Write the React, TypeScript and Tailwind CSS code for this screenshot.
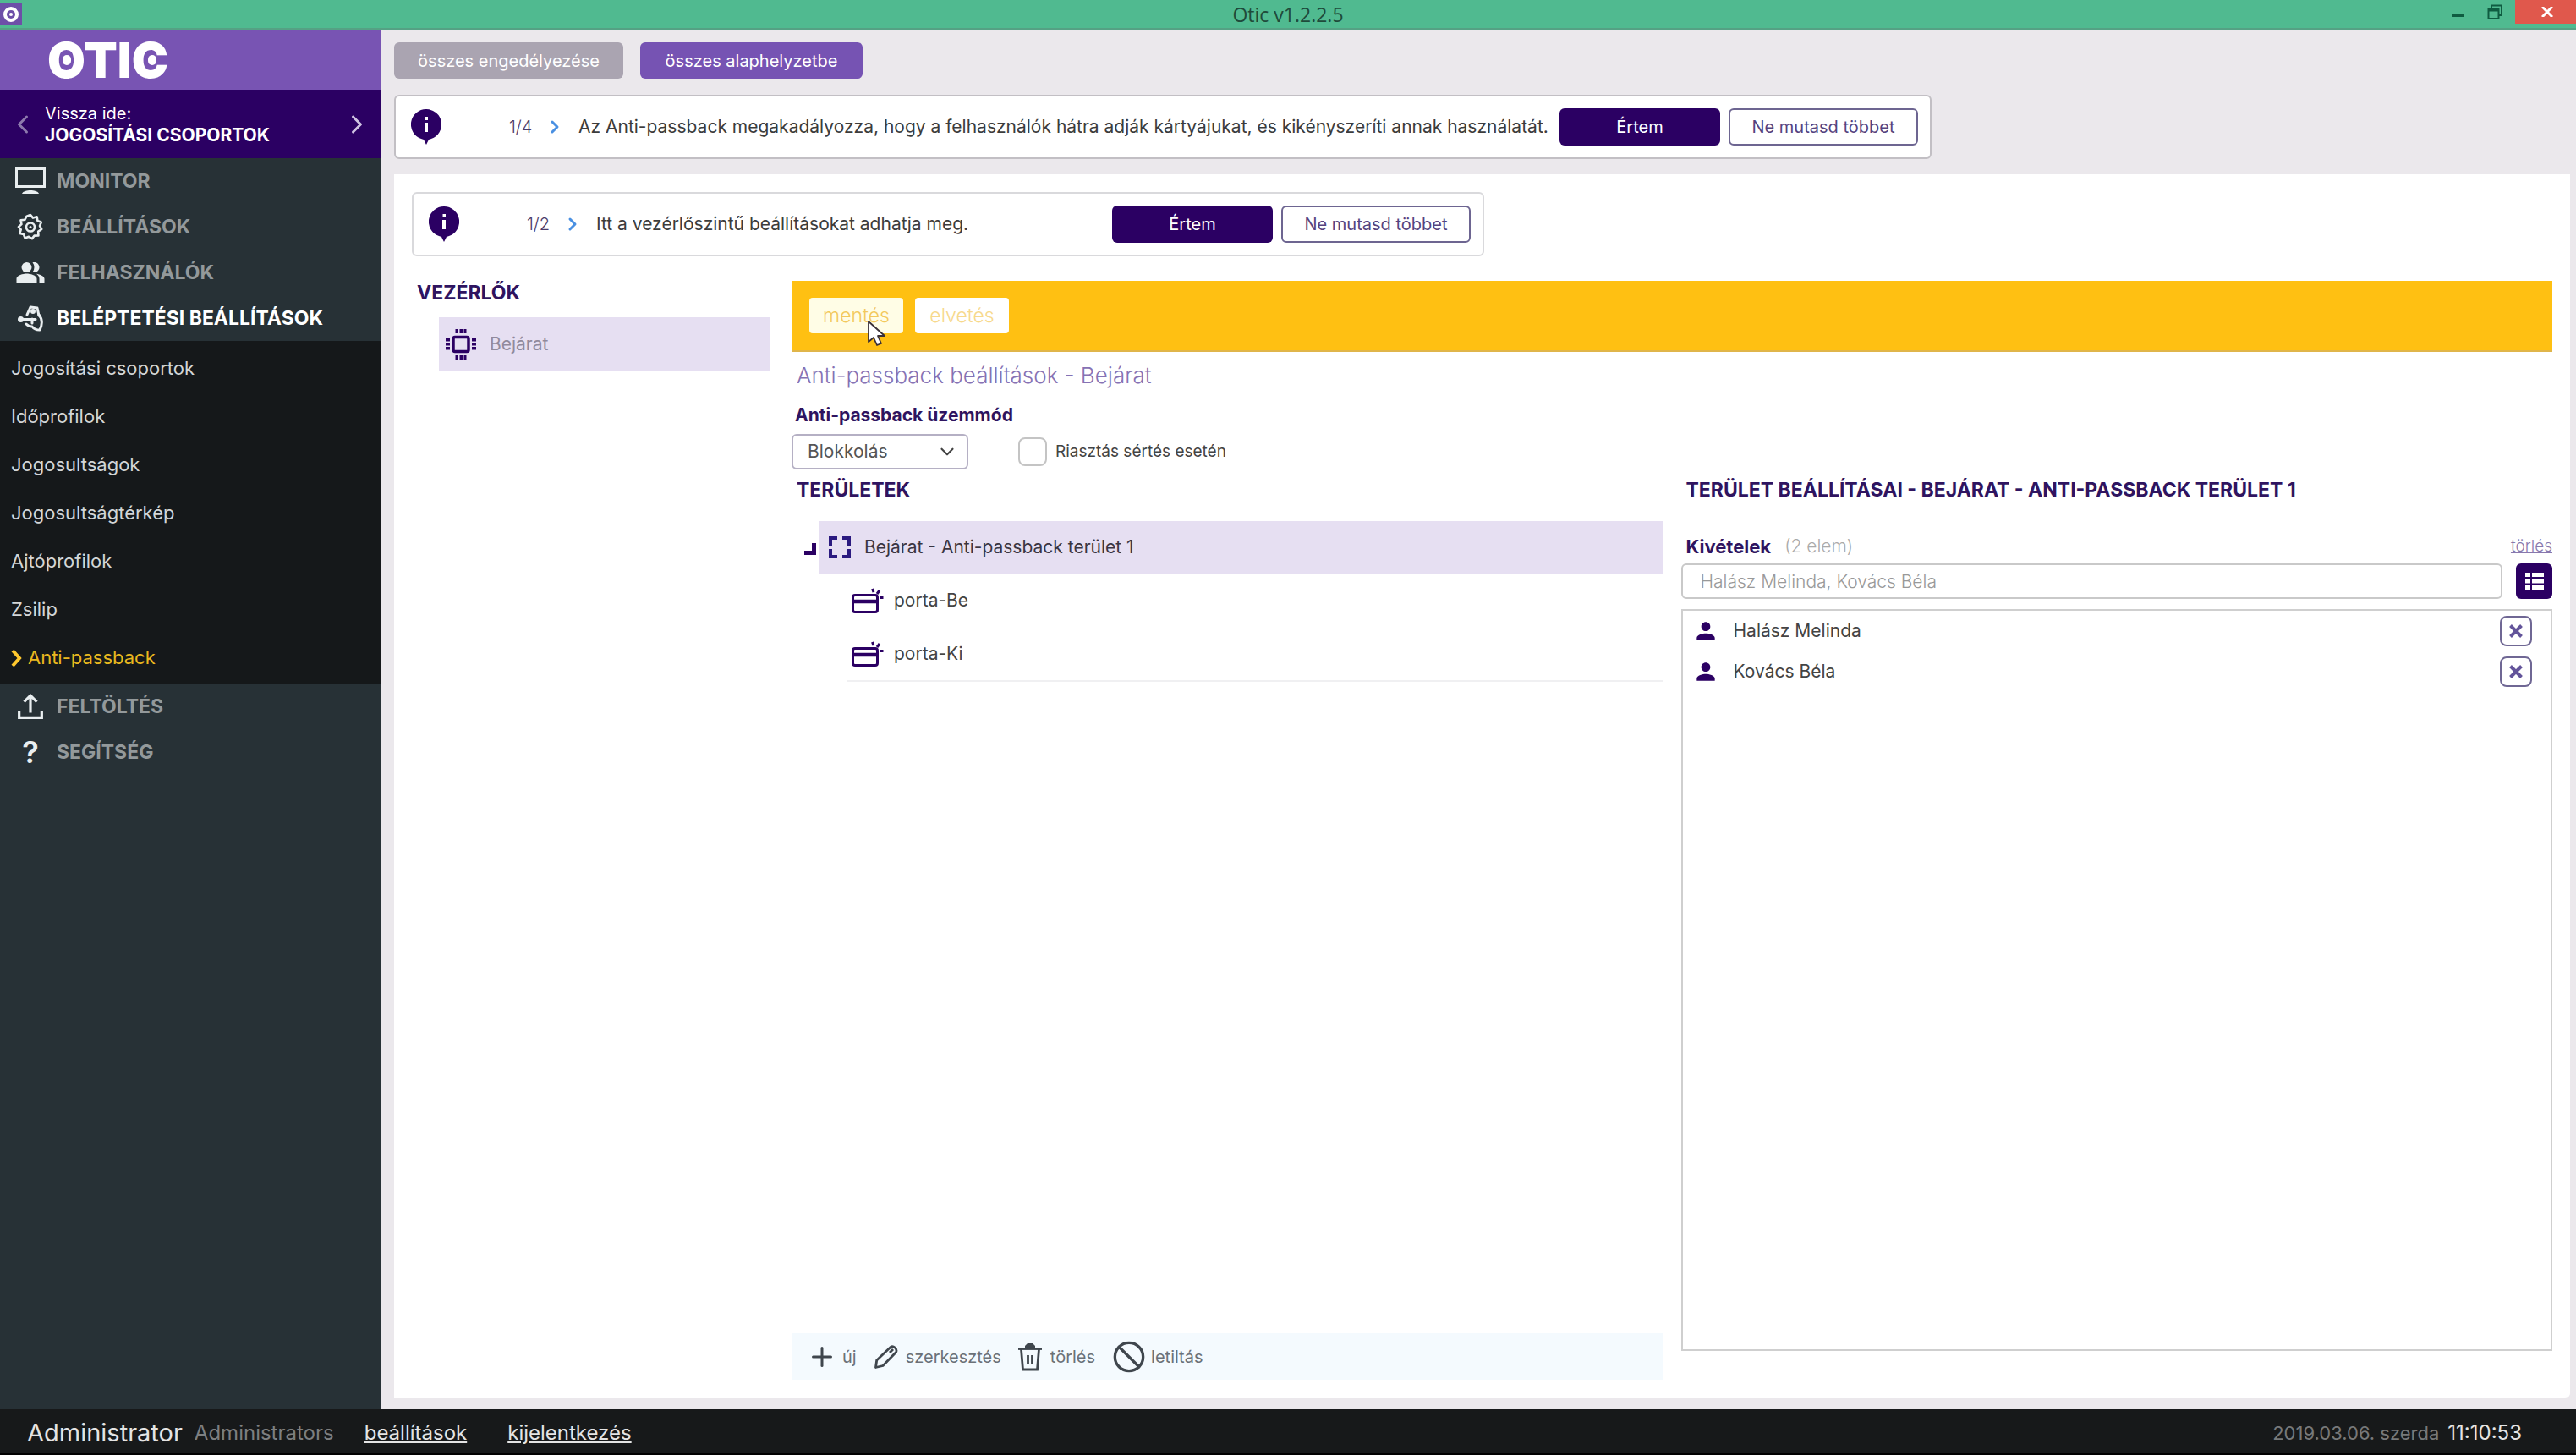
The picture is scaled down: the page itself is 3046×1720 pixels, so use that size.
import type { ReactNode } from "react";
import { clsx } from "clsx";
import { Ban, ChevronDown, ChevronLeft, ChevronRight, Plus } from "lucide-react";
import { MdPeopleAlt, MdPerson } from "react-icons/md";

const subItems = [
  "Jogosítási csoportok",
  "Időprofilok",
  "Jogosultságok",
  "Jogosultságtérkép",
  "Ajtóprofilok",
  "Zsilip",
  "Anti-passback",
];

const exceptions = ["Halász Melinda", "Kovács Béla"];

function MonitorIcon() {
  return (
    <svg viewBox="0 0 36 32" className="h-8 w-9" fill="none" stroke="currentColor" strokeWidth="3">
      <rect x="1.5" y="1.5" width="33" height="21" />
      <path d="M8 31c1-3 6-4 10-4s9 1 10 4z" fill="currentColor" stroke="none" />
    </svg>
  );
}

function GearIcon() {
  return (
    <svg viewBox="0 0 32 32" className="size-8" fill="none" stroke="currentColor" strokeLinejoin="round">
      <path
        strokeWidth="2.6"
        d="M16 2l3 3.6 4.6-1.3.8 4.7 4.4 1.8-1.8 4.3 2.2 3.9-4 2.6.2 4.8-4.8.2-2.7 3.5-3.9-2.3-4.4 1.7-1.7-4.4-4.5-1.1 1.3-4.6L2 16.2l3.4-3.1-.9-4.700 4.800-.6 2.200-4.100z"
      />
      <circle cx="16" cy="16.5" r="5" strokeWidth="2.6" />
      <circle cx="16" cy="16.5" r="1.5" fill="currentColor" stroke="none" />
    </svg>
  );
}

function AccessIcon() {
  return (
    <svg viewBox="0 0 32 32" className="size-8" fill="none" stroke="currentColor" strokeWidth="3" strokeLinejoin="round" strokeLinecap="round">
      <path d="M12 12l4-9 8 1 2 9" />
      <circle cx="19" cy="8" r="1.5" />
      <path d="M26 12c4 5 4 12 1 18-4 0-7-1-9-4-3 0-5-1-7-3" />
      <circle cx="4.5" cy="17.5" r="3.5" fill="currentColor" stroke="none" />
      <path d="M5 17.5h17M18 17v5" />
    </svg>
  );
}

function UploadIcon() {
  return (
    <svg viewBox="0 0 30 30" className="size-8" fill="none" stroke="currentColor" strokeWidth="3">
      <path d="M15 22V4M8 10l7-7 7 7" />
      <path d="M2.5 20v7.5h25V20" />
    </svg>
  );
}

function ChipIcon() {
  return (
    <svg viewBox="0 0 38 38" className="size-[38px] text-[#2b0063]" fill="none" stroke="currentColor">
      <rect x="10" y="10.5" width="18" height="17" rx="2" strokeWidth="3.5" />
      <path d="M12.5 3.5h13M12.5 34.5h13" strokeWidth="5" strokeDasharray="3.5 1.5" />
      <path d="M3.5 12v14M34.5 12v14" strokeWidth="5" strokeDasharray="3.5 1.5" />
    </svg>
  );
}

function AreaIcon() {
  return (
    <svg viewBox="0 0 26 26" className="size-[26px] text-[#2b1a80]" fill="none" stroke="currentColor" strokeWidth="4">
      <path d="M2 11V2h8M16 2h8v9M24 15v9h-8M10 24H2v-9" />
    </svg>
  );
}

function CardIcon() {
  return (
    <svg viewBox="0 0 38 30" className="h-[30px] w-[38px] text-[#2b0063]" fill="none" stroke="currentColor">
      <rect x="1.5" y="8.5" width="29" height="20" rx="2.5" strokeWidth="3" />
      <path d="M2 16h28" strokeWidth="4.5" />
      <path d="M24.5 1l1.5 4M33 3l-3 4M33.5 11.5h4" strokeWidth="3" />
    </svg>
  );
}

function PencilIcon() {
  return (
    <svg viewBox="0 0 30 30" className="size-[30px]" fill="none" stroke="currentColor" strokeWidth="2.8" strokeLinejoin="round">
      <path d="M2.5 27.5l1.2-8.5L20 3.5c3-2.5 8.5 2 6.5 6L11 25.5z" />
      <path d="M19 10l4-4" />
    </svg>
  );
}

function TrashIcon() {
  return (
    <svg viewBox="0 0 28 34" className="h-[34px] w-7" fill="none" stroke="currentColor" strokeWidth="2.8">
      <path d="M0 7.5h28" />
      <path d="M8 8V4l3-3h6l3 3v4z" fill="currentColor" stroke="none" />
      <path d="M3.5 8l2 24h17l2-24M11.5 15v11M16.5 15v11" />
    </svg>
  );
}

function ListIcon() {
  return (
    <svg viewBox="0 0 22 20" className="h-5 w-[22px]" fill="currentColor">
      <path d="M0 0h6v5H0zM8 0h14v5H8zM0 7.5h6v5H0zM8 7.5h14v5H8zM0 15h6v5H0zM8 15h14v5H8z" />
    </svg>
  );
}

function InfoPin() {
  return (
    <svg viewBox="0 0 36 42" className="h-[42px] w-9 shrink-0">
      <path d="M18 0a18 18 0 0 1 6 35l-3 1-3 6-3-6-3-1A18 18 0 0 1 18 0z" fill="#2b0063" />
      <path d="M16.5 9h3.5v4h-3.5zM16 16h4v11h-4z" fill="#fff" />
    </svg>
  );
}

function Tip({ step, text, className, textClassName }: { step: string; text: string; className: string; textClassName: string }) {
  return (
    <div className={clsx("flex w-fit items-center rounded-md border-2 bg-white py-3.5 pr-3.5 pl-[18px]", className)}>
      <InfoPin />
      <span className="ml-20 w-6 text-[20px] font-light whitespace-nowrap text-[#4b3a68]">{step}</span>
      <ChevronRight className="ml-[18px] mr-4 size-6 shrink-0 text-[#4a90e2]" strokeWidth={3} />
      <p className={clsx("text-[21px] text-[#3c3c3c]", textClassName)}>{text}</p>
      <button className="h-[44px] w-[190px] rounded-md bg-[#2b0063] text-[20px] text-white">Értem</button>
      <button className="ml-2.5 h-[44px] w-[224px] rounded-md border-2 border-[#6d6591] bg-white text-[20px] text-[#55437f]">
        Ne mutasd többet
      </button>
    </div>
  );
}

function MenuItem({ icon, label, active }: { icon: ReactNode; label: string; active?: boolean }) {
  return (
    <a href="#" className={clsx("flex h-[54px] items-center gap-[13px] pl-[18px] text-[23px] font-bold", active ? "text-white" : "text-[#93999b]")}>
      <span className="flex w-9 justify-center text-[#e9eef0]">{icon}</span>
      {label}
    </a>
  );
}

function Sidebar() {
  return (
    <aside className="flex w-[451px] shrink-0 flex-col bg-[#273136]">
      <div className="flex h-[71px] items-center bg-[#7854b3] pl-14">
        <div className="relative text-[58px] leading-none font-black text-white">
          OTIC
          <span className="absolute top-[23px] left-[18px] h-3 w-2.5 rounded-full bg-white" />
          <span className="absolute top-[23px] right-[14px] h-3 w-2.5 rounded-full bg-white" />
        </div>
      </div>
      <div className="flex h-[81px] items-center bg-[#2b0063] text-white">
        <button aria-label="Előző" className="flex w-[53px] justify-center text-[#8d79ad]">
          <ChevronLeft className="h-10 w-9" strokeWidth={2} />
        </button>
        <div className="flex-1 text-[20px] leading-[26px]">
          Vissza ide:
          <div className="text-[21px] font-bold">JOGOSÍTÁSI CSOPORTOK</div>
        </div>
        <button aria-label="Következő" className="flex w-[58px] justify-center text-[#cfc3e2]">
          <ChevronRight className="h-10 w-9" strokeWidth={2} />
        </button>
      </div>
      <nav>
        <MenuItem icon={<MonitorIcon />} label="MONITOR" />
        <MenuItem icon={<GearIcon />} label="BEÁLLÍTÁSOK" />
        <MenuItem icon={<MdPeopleAlt className="size-9" />} label="FELHASZNÁLÓK" />
        <MenuItem icon={<AccessIcon />} label="BELÉPTETÉSI BEÁLLÍTÁSOK" active />
        <ul className="flex flex-col bg-[#15181a] pt-1 pb-0.5 text-[22px]">
          {subItems.map((item) => {
            const current = item === "Anti-passback";
            return (
              <li key={item}>
                <a href="#" className={clsx("flex h-[57px] items-center pl-[13px]", current ? "text-[#eab81f]" : "text-[#d3d6d7]")}>
                  {current && (
                    <svg viewBox="0 0 14 20" className="mr-1.5 h-5 w-3.5" fill="none" stroke="#ffc82e" strokeWidth="4">
                      <path d="M2 1l8 9-8 9" />
                    </svg>
                  )}
                  {item}
                </a>
              </li>
            );
          })}
        </ul>
        <MenuItem icon={<UploadIcon />} label="FELTÖLTÉS" />
        <MenuItem icon={<span className="text-[36px] font-semibold">?</span>} label="SEGÍTSÉG" />
      </nav>
    </aside>
  );
}

function Heading({ children }: { children: ReactNode }) {
  return <h2 className="pl-1.5 text-[23px] leading-7 font-bold text-[#2f1460]">{children}</h2>;
}

function Areas() {
  return (
    <section className="flex flex-col">
      <Heading>TERÜLETEK</Heading>
      <div className="mt-[23px] flex items-center">
        <svg viewBox="0 0 14 18" className="mr-1 ml-[15px] h-[18px] w-3.5" fill="#2b0063">
          <path d="M9 4h5v14H0v-5h9z" />
        </svg>
        <div className="flex h-[62px] flex-1 items-center gap-4 bg-[#e6dff2] pl-[11px] text-[21px] text-[#3a3542]">
          <AreaIcon />
          Bejárat - Anti-passback terület 1
        </div>
      </div>
      <ul className="ml-[65px] border-b-2 border-[#f0f0f2] text-[21px] text-[#444]">
        {["porta-Be", "porta-Ki"].map((door) => (
          <li key={door} className="flex h-[63px] items-center gap-3 pl-1.5">
            <CardIcon />
            {door}
          </li>
        ))}
      </ul>
      <div className="mt-auto flex h-[55px] items-center bg-[#f4fafe] pl-[18px] text-[20px] text-[#6b7178] [&_svg]:text-[#3f464d]">
        <button className="flex items-center gap-1.5">
          <Plus className="size-9" strokeWidth={2} />
          új
        </button>
        <button className="ml-5 flex items-center gap-2">
          <PencilIcon />
          szerkesztés
        </button>
        <button className="ml-5 flex items-center gap-2.5">
          <TrashIcon />
          törlés
        </button>
        <button className="ml-5 flex items-center gap-1.5">
          <Ban className="size-10" strokeWidth={2} />
          letiltás
        </button>
      </div>
    </section>
  );
}

function AreaSettings() {
  return (
    <section className="flex flex-col pb-[34px]">
      <Heading>TERÜLET BEÁLLÍTÁSAI - BEJÁRAT - ANTI-PASSBACK TERÜLET 1</Heading>
      <div className="mt-[39px] flex h-7 items-center">
        <label htmlFor="exceptions" className="pl-1.5 text-[22px] font-bold text-[#2f1460]">
          Kivételek
        </label>
        <span className="ml-4 text-[21px] font-light text-[#aaa]">(2 elem)</span>
        <a href="#" className="ml-auto text-[19px] font-light text-[#8878ad] underline">
          törlés
        </a>
      </div>
      <div className="mt-1.5 flex gap-4">
        <input
          id="exceptions"
          readOnly
          value="Halász Melinda, Kovács Béla"
          className="h-[42px] min-w-0 flex-1 rounded-md border-2 border-[#c9c9c9] bg-white pl-[21px] text-[21px] font-light text-[#999]"
        />
        <button aria-label="Lista" className="flex w-[43px] items-center justify-center rounded-md bg-[#2b0063] text-white">
          <ListIcon />
        </button>
      </div>
      <ul className="mt-3 flex-1 border-2 border-[#cfcfcf] text-[21px] text-[#444]">
        {exceptions.map((name) => (
          <li key={name} className="flex h-12 items-center pr-[22px] pl-[11px]">
            <MdPerson className="mr-[17px] size-8 text-[#2b0063]" />
            {name}
            <button aria-label={`${name} törlése`} className="ml-auto flex h-9 w-[38px] items-center justify-center rounded-lg border-2 border-[#6f6794] text-[#63549a]">
              <svg viewBox="0 0 16 16" className="size-4" fill="none" stroke="currentColor" strokeWidth="4">
                <path d="M1.5 1.5l13 13M14.5 1.5l-13 13" />
              </svg>
            </button>
          </li>
        ))}
      </ul>
    </section>
  );
}

function Content() {
  return (
    <div className="flex min-w-0 flex-1 flex-col">
      <div className="flex h-[84px] items-center gap-3.5 border-b-2 border-[#e0b54a] bg-[#ffc012] pl-[21px] text-[23px] font-light">
        <button className="relative h-[42px] w-[111px] rounded-sm bg-[#fffde6] text-[#f3c95c]">
          mentés
          <svg viewBox="0 0 22 30" className="absolute top-[27px] left-[69px] z-10 h-[30px] w-[22px]">
            <path d="M1 1v24l6-5 4 9 5-2-4-9h8z" fill="#fff" stroke="#3a3038" strokeWidth="1.8" strokeLinejoin="round" />
          </svg>
        </button>
        <button className="h-[42px] w-[111px] rounded-sm bg-white text-[#f7d98c]">elvetés</button>
      </div>
      <h1 className="mt-3 pl-1.5 text-[26px] leading-8 font-light text-[#8672b4]">Anti-passback beállítások - Bejárat</h1>
      <label htmlFor="mode" className="mt-[17px] w-fit pl-1 text-[21px] leading-7 font-bold text-[#2f1460]">
        Anti-passback üzemmód
      </label>
      <div className="mt-2 flex items-center">
        <div className="relative w-[209px]">
          <select id="mode" className="h-[42px] w-full appearance-none rounded-md border-2 border-[#b5b0c4] bg-white pl-[17px] text-[21px] text-[#555]">
            <option>Blokkolás</option>
          </select>
          <ChevronDown className="pointer-events-none absolute top-2 right-3 size-[26px] text-[#444]" strokeWidth={2} />
        </div>
        <input id="alarm" type="checkbox" className="ml-[59px] size-[34px] appearance-none rounded-lg border-2 border-[#c4c4c4] bg-white" />
        <label htmlFor="alarm" className="pl-2.5 text-[19px] text-[#444]">
          Riasztás sértés esetén
        </label>
      </div>
      <div className="mt-2.5 grid flex-1 grid-cols-2 gap-[21px]">
        <Areas />
        <AreaSettings />
      </div>
    </div>
  );
}

function TitleBar() {
  return (
    <header className="grid h-[35px] grid-cols-[1fr_auto_1fr] items-center border-b-2 border-[#55a184] bg-[#50ba90]">
      <svg viewBox="0 0 26 26" className="h-[26px] w-[26px]">
        <rect width="26" height="26" fill="#6d4fa8" />
        <circle cx="13" cy="13" r="7" fill="none" stroke="#fff" strokeWidth="4" />
        <circle cx="13" cy="13" r="2" fill="#fff" />
      </svg>
      <span className="font-['Open_Sans',sans-serif] text-[23px] leading-8 text-[#1f4a3a]">Otic v1.2.2.5</span>
      <div className="flex justify-end self-start text-[#0f5c41]">
        <button aria-label="Kis méret" className="flex h-7 w-10 items-center justify-center">
          <span className="mt-2 h-1 w-3.5 bg-current" />
        </button>
        <button aria-label="Előző méret" className="flex h-7 w-12 items-center justify-center">
          <svg viewBox="0 0 18 18" className="size-[18px]" fill="none" stroke="currentColor" strokeWidth="2">
            <path d="M5 4V1.5h12V13h-3" />
            <rect x="1.5" y="5" width="12" height="12" />
            <path d="M1 7h13" strokeWidth="3" />
          </svg>
        </button>
        <button aria-label="Bezárás" className="flex h-7 w-[72px] items-center justify-center bg-[#e0584c] pl-1">
          <svg viewBox="0 0 14 12" className="h-3 w-3.5" fill="none" stroke="#fff" strokeWidth="3">
            <path d="M1 0l12 12M13 0L1 12" />
          </svg>
        </button>
      </div>
    </header>
  );
}

function StatusBar() {
  return (
    <footer className="flex h-[54px] items-center border-b-2 border-black bg-[#17191a] pt-1 pr-16 pl-8 text-[#e4e4e4]">
      <span className="text-[29px]">Administrator</span>
      <span className="ml-3.5 text-[24px] text-[#7d7f80]">Administrators</span>
      <a href="#" className="ml-9 text-[24px] underline">beállítások</a>
      <a href="#" className="ml-12 text-[24px] underline">kijelentkezés</a>
      <span className="ml-auto text-[22px] text-[#77797a]">2019.03.06. szerda</span>
      <span className="ml-2.5 text-[24px]">11:10:53</span>
    </footer>
  );
}

export default function App() {
  return (
    <div className="flex min-h-screen flex-col bg-[#ebe8ec] font-['Inter',sans-serif]">
      <TitleBar />
      <div className="flex flex-1">
        <Sidebar />
        <main className="flex min-w-0 flex-1 flex-col pt-[15px] pr-[7px] pb-[13px] pl-[15px]">
          <div className="flex gap-5 text-[20px] text-white">
            <button className="h-[43px] w-[271px] rounded-md bg-[#aaa4b1]">összes engedélyezése</button>
            <button className="h-[43px] w-[263px] rounded-md bg-[#7653b3]">összes alaphelyzetbe</button>
          </div>
          <Tip
            step="1/4"
            text="Az Anti-passback megakadályozza, hogy a felhasználók hátra adják kártyájukat, és kikényszeríti annak használatát."
            className="mt-[19px] border-[#c2bfc4]"
            textClassName="min-w-[1160px]"
          />
          <div className="mt-[18px] flex flex-1 flex-col rounded-br-md bg-white px-[21px] pt-[21px] pb-[22px]">
            <Tip
              step="1/2"
              text="Itt a vezérlőszintű beállításokat adhatja meg."
              className="border-[#d9d9dc]"
              textClassName="min-w-[610px]"
            />
            <div className="mt-[29px] flex flex-1 gap-[25px]">
              <section className="w-[424px] shrink-0">
                <Heading>VEZÉRLŐK</Heading>
                <div className="mt-[15px] ml-8 flex h-16 items-center gap-[15px] bg-[#e6dff2] pl-[7px] text-[21px] text-[#918a9c]">
                  <ChipIcon />
                  Bejárat
                </div>
              </section>
              <Content />
            </div>
          </div>
        </main>
      </div>
      <StatusBar />
    </div>
  );
}
